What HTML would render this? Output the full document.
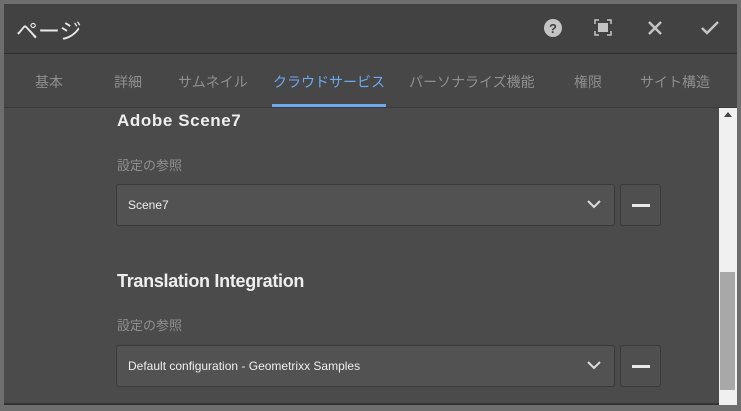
<!DOCTYPE html>
<html><head><meta charset="utf-8"><style>
*{margin:0;padding:0;box-sizing:border-box}
body{width:741px;height:411px;background:#6e6e6e;position:relative;overflow:hidden;font-family:"Liberation Sans","Noto Sans CJK JP",sans-serif}
.dlg{position:absolute;left:4px;top:4px;width:733px;height:401px;background:#4b4b4b;border-bottom:2px solid #333}
.hdr{position:absolute;left:0;top:0;width:733px;height:50px;background:#424242;border-bottom:1px solid #2f2f2f}
.title{position:absolute;left:12px;top:10px;font-size:22px;color:#e8e8e8}
.tabs{position:absolute;left:0;top:50px;width:733px;height:54px;background:#474747;border-bottom:1px solid #3a3a3a}
.tab{position:absolute;top:18px;font-size:14px;color:#8f8f8f;white-space:nowrap}
.act{color:#6fa8f0}
.ul{position:absolute;left:268px;top:100px;width:114px;height:3px;background:#6fa8f0}
h3{position:absolute;left:113px;font-size:16px;color:#eee;font-weight:bold;white-space:nowrap}
.lab{position:absolute;left:113px;font-size:13px;color:#8f8f8f}
.sel{position:absolute;left:112px;width:499px;height:42px;background:#525252;border:1px solid #3a3a3a;border-radius:3px;color:#eee;font-size:12px;padding:13px 11px}
.sel svg{position:absolute;right:13px;top:14px}
.btn{position:absolute;left:616px;width:41px;height:42px;background:#4f4f4f;border:1px solid #3a3a3a;border-radius:3px}
.btn:after{content:"";position:absolute;left:11px;top:19px;width:18px;height:3px;background:#e8e8e8}
.sb{position:absolute;left:715px;top:104px;width:18px;height:297px;background:#f0f0f0}
.th{position:absolute;left:716px;top:268px;width:15px;height:118px;background:#a8a8a8}
</style></head><body>
<div class="dlg">
<div class="hdr">
<div class="title">ページ</div>
<svg style="position:absolute;left:539px;top:14px" width="20" height="20"><circle cx="10" cy="10" r="9" fill="#c4c4c4"/><text x="10" y="15" font-size="13" font-weight="bold" fill="#424242" text-anchor="middle" font-family="Liberation Sans">?</text></svg>
<svg style="position:absolute;left:590px;top:15px" width="18" height="17" fill="none" stroke="#c4c4c4" stroke-width="1.5"><path d="M1 5V1h4M13 1h4v4M17 12v4h-4M5 16H1v-4"/><rect x="4" y="4" width="10" height="9" fill="#c4c4c4" stroke="none"/></svg>
<svg style="position:absolute;left:643px;top:16px" width="16" height="16" stroke="#c4c4c4" stroke-width="2.5"><path d="M2 2L14 14M14 2L2 14"/></svg>
<svg style="position:absolute;left:697px;top:16px" width="18" height="16" fill="none" stroke="#c4c4c4" stroke-width="2.5"><path d="M1 8l5 5L17 2"/></svg>
</div>
<div class="tabs">
<div class="tab" style="left:31px">基本</div>
<div class="tab" style="left:110px">詳細</div>
<div class="tab" style="left:174px">サムネイル</div>
<div class="tab act" style="left:269px">クラウドサービス</div>
<div class="tab" style="left:405px">パーソナライズ機能</div>
<div class="tab" style="left:570px">権限</div>
<div class="tab" style="left:636px">サイト構造</div>
</div>
<div class="ul"></div>
<h3 style="top:107px;font-size:17px;letter-spacing:0.6px">Adobe Scene7</h3>
<div class="lab" style="top:151px">設定の参照</div>
<div class="sel" style="top:180px">Scene7<svg width="14" height="10" fill="none" stroke="#ddd" stroke-width="2"><path d="M1 2l6 6 6-6"/></svg></div>
<div class="btn" style="top:180px"></div>
<h3 style="top:267px;font-size:18px;letter-spacing:-0.3px">Translation Integration</h3>
<div class="lab" style="top:311px">設定の参照</div>
<div class="sel" style="top:341px">Default configuration - Geometrixx Samples<svg width="14" height="10" fill="none" stroke="#ddd" stroke-width="2"><path d="M1 2l6 6 6-6"/></svg></div>
<div class="btn" style="top:341px"></div>
<div class="sb"></div>
<svg style="position:absolute;left:720px;top:107px" width="8" height="6"><path d="M0 6L4 1L8 6Z" fill="#444"/></svg>
<div class="th"></div>
</div>
</body></html>
